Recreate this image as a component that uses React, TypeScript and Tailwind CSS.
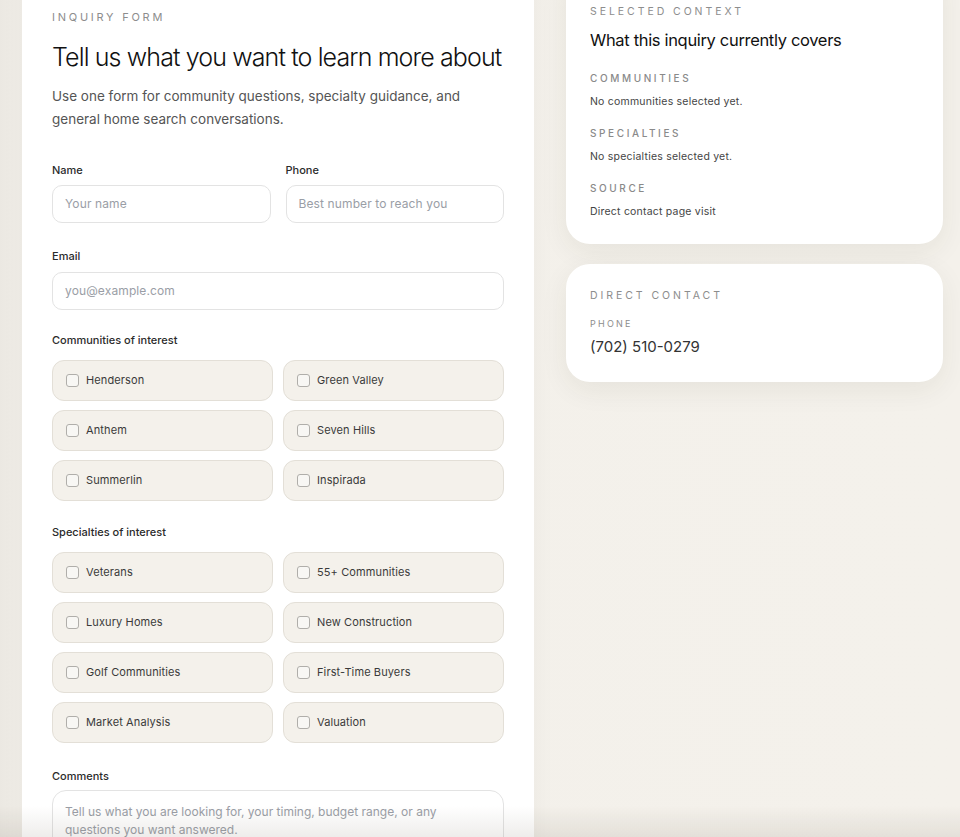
import React from "react";

const communities = ["Henderson", "Green Valley", "Anthem", "Seven Hills", "Summerlin", "Inspirada"];
const specialties = [
  "Veterans",
  "55+ Communities",
  "Luxury Homes",
  "New Construction",
  "Golf Communities",
  "First-Time Buyers",
  "Market Analysis",
  "Valuation",
];

const CheckTile: React.FC<{ label: string }> = ({ label }) => (
  <label className="flex h-[41px] items-center gap-[7px] rounded-[12px] border border-[#e3dfd7] bg-[#f4f1eb] pl-[13px]">
    <span className="h-[13px] w-[13px] rounded-[3px] border border-[#b0aeaa] bg-[#f8f7f4]" />
    <span className="text-[11px] tracking-[0.01em] text-[#3a3a3a]">{label}</span>
  </label>
);

const Field: React.FC<{ label: string; placeholder: string }> = ({ label, placeholder }) => (
  <div>
    <p className="mb-[7px] text-[11px] font-medium text-[#2b2b2b]">{label}</p>
    <div className="flex h-[38px] items-center rounded-[10px] border border-[#e3e3e3] bg-white px-[12px] text-[12px] tracking-[0.01em] text-[#9a9ea6]">
      {placeholder}
    </div>
  </div>
);

const App: React.FC = () => {
  return (
    <div className="relative min-h-[837px] bg-[linear-gradient(90deg,#ebe8e2_0%,#f3f0ea_3%,#f4f1eb_100%)] font-['Inter',sans-serif] text-[#222]">
      <div className="grid grid-cols-[512px_377px] items-start gap-[32px] pl-[22px] -mt-[26px]">
        {/* Inquiry form */}
        <section className="bg-white px-[30px] pt-[35px] pb-[40px] shadow-[0_0_24px_rgba(0,0,0,0.04)]">
          <p className="text-[11px] tracking-[0.25em] text-[#8d8d8d]">INQUIRY FORM</p>
          <h1 className="mt-[16px] text-[25px] leading-[30px] font-light tracking-[-0.035em] text-[#111]">
            Tell us what you want to learn more about
          </h1>
          <p className="mt-[13px] text-[13.5px] leading-[23px] text-[#555]">
            Use one form for community questions, specialty guidance, and general home search conversations.
          </p>

          <div className="mt-[31px] grid grid-cols-2 gap-[15px]">
            <Field label="Name" placeholder="Your name" />
            <Field label="Phone" placeholder="Best number to reach you" />
          </div>
          <div className="mt-[25px]">
            <Field label="Email" placeholder="you@example.com" />
          </div>

          <p className="mt-[22px] text-[11px] font-medium text-[#2b2b2b]">Communities of interest</p>
          <div className="mt-[12px] grid grid-cols-2 gap-x-[10px] gap-y-[9px]">
            {communities.map((c) => (
              <CheckTile key={c} label={c} />
            ))}
          </div>

          <p className="mt-[23px] text-[11px] font-medium text-[#2b2b2b]">Specialties of interest</p>
          <div className="mt-[11px] grid grid-cols-2 gap-x-[10px] gap-y-[9px]">
            {specialties.map((s) => (
              <CheckTile key={s} label={s} />
            ))}
          </div>

          <p className="mt-[25px] text-[11px] font-medium text-[#2b2b2b]">Comments</p>
          <div className="mt-[6px] h-[110px] rounded-[14px] border border-[#e3e3e3] px-[12px] pt-[12px] text-[12px] leading-[18px] text-[#9a9ea6]">
            Tell us what you are looking for, your timing, budget range, or any questions you want answered.
          </div>
        </section>

        {/* Right column */}
        <aside className="flex flex-col gap-[20px]">
          <div className="rounded-b-[24px] bg-white px-[24px] pt-[30px] pb-[24px] shadow-[0_8px_28px_rgba(60,50,30,0.07)]">
            <p className="text-[10.5px] tracking-[0.28em] text-[#8d8d8d]">SELECTED CONTEXT</p>
            <h2 className="mt-[8px] text-[16.5px] leading-[24px] tracking-[-0.02em] text-[#111]">
              What this inquiry currently covers
            </h2>
            <div className="mt-[19px] space-y-[16.5px]">
              <div>
                <p className="text-[10px] font-medium tracking-[0.26em] text-[#8a8a8a]">COMMUNITIES</p>
                <p className="mt-[8px] text-[10.5px] tracking-[0.02em] text-[#444]">No communities selected yet.</p>
              </div>
              <div>
                <p className="text-[10px] font-medium tracking-[0.26em] text-[#8a8a8a]">SPECIALTIES</p>
                <p className="mt-[8px] text-[10.5px] tracking-[0.02em] text-[#444]">No specialties selected yet.</p>
              </div>
              <div>
                <p className="text-[10px] font-medium tracking-[0.26em] text-[#8a8a8a]">SOURCE</p>
                <p className="mt-[8px] text-[10.5px] tracking-[0.02em] text-[#444]">Direct contact page visit</p>
              </div>
            </div>
          </div>

          <div className="rounded-[24px] bg-white px-[24px] pt-[24px] pb-[23px] shadow-[0_8px_28px_rgba(60,50,30,0.07)]">
            <p className="text-[10.5px] tracking-[0.28em] text-[#8d8d8d]">DIRECT CONTACT</p>
            <p className="mt-[13px] text-[9px] tracking-[0.25em] text-[#8d8d8d]">PHONE</p>
            <p className="mt-[6px] text-[15px] text-[#333]">(702) 510-0279</p>
          </div>
        </aside>
      </div>

      <div className="pointer-events-none fixed inset-x-0 bottom-0 h-[32px] bg-gradient-to-b from-transparent to-[rgba(120,110,95,0.12)]" />
    </div>
  );
};

export default App;
